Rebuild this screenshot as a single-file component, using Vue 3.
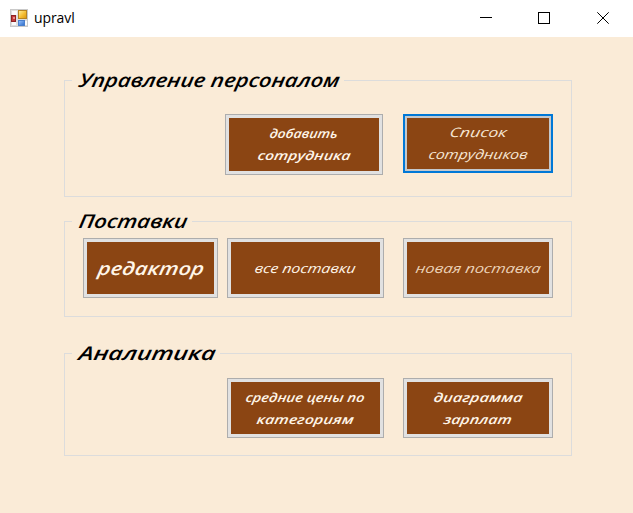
<script setup>
const groups = [
  {
    id: 'staff',
    title: { text: 'Управление персоналом', width: 262 },
    buttons: [
      { id: 'add', size: 12.5, bold: true, lines: [{ text: 'добавить', width: 68 }, { text: 'сотрудника', width: 93 }] },
      { id: 'list', size: 13, focused: true, lines: [{ text: 'Список', width: 57 }, { text: 'сотрудников', width: 99 }] },
    ],
  },
  {
    id: 'supply',
    title: { text: 'Поставки', width: 110 },
    buttons: [
      { id: 'editor', size: 18, bold: true, lines: [{ text: 'редактор', width: 106 }] },
      { id: 'all', size: 13, lines: [{ text: 'все поставки', width: 101 }] },
      { id: 'new', size: 13, dim: true, lines: [{ text: 'новая поставка', width: 125 }] },
    ],
  },
  {
    id: 'analytics',
    title: { text: 'Аналитика', width: 138 },
    buttons: [
      { id: 'prices', size: 12.5, bold: true, lines: [{ text: 'средние цены по', width: 119 }, { text: 'категориям', width: 97 }] },
      { id: 'chart', size: 12.5, bold: true, lines: [{ text: 'диаграмма', width: 89 }, { text: 'зарплат', width: 68 }] },
    ],
  },
]
</script>

<template>
  <div class="window">
    <header class="titlebar">
      <svg class="app-icon" width="18" height="18" viewBox="0 0 18 18">
        <defs>
          <linearGradient id="gold" x2="1" y2="1"><stop stop-color="#fff0a0" /><stop offset=".55" stop-color="#f5bd32" /><stop offset="1" stop-color="#d79512" /></linearGradient>
          <linearGradient id="blue" x2="1" y2="1"><stop stop-color="#9cc5ff" /><stop offset="1" stop-color="#2869c7" /></linearGradient>
        </defs>
        <rect x=".5" y=".5" width="17" height="17" fill="#dedede" stroke="#c9c9c9" />
        <path d="M2 2h5v4H2zM2 13h4v3H2zM15 12h2v4h-2z" fill="#fafafa" />
        <rect x="1.5" y="6.5" width="4" height="6" fill="#c33a3a" stroke="#8f2222" />
        <path d="M3 8h2v2H3z" fill="#ea8b86" />
        <rect x="8.5" y="1.5" width="8" height="8" fill="url(#gold)" stroke="#b78422" />
        <rect x="8.5" y="11.5" width="6" height="5" fill="url(#blue)" stroke="#4a7fcb" />
      </svg>
      <span class="caption">upravl</span>
      <nav class="controls">
        <svg class="minimize" width="12" height="12" viewBox="0 0 12 12" shape-rendering="crispEdges"><path d="M0 5.5h12" /></svg>
        <svg class="maximize" width="12" height="12" viewBox="0 0 12 12" shape-rendering="crispEdges"><path d="M.5.5h11v11H.5z" /></svg>
        <svg width="12" height="12" viewBox="0 0 12 12"><path d="M.3.3l11.4 11.4M11.7.3L.3 11.7" /></svg>
      </nav>
    </header>
    <main class="form">
      <section v-for="g in groups" :key="g.id" class="group" :class="g.id">
        <div class="legend">
          <i class="rule lead"></i>
          <svg class="title" :width="g.title.width" height="30">
            <g transform="translate(0 20.3) skewX(-10)">
              <text :textLength="g.title.width - 1.5" lengthAdjust="spacingAndGlyphs">{{ g.title.text }}</text>
            </g>
          </svg>
          <i class="rule tail"></i>
        </div>
        <div class="body">
          <button v-for="b in g.buttons" :key="b.id" class="btn" :class="[b.id, { focused: b.focused, bold: b.bold, dim: b.dim }]">
            <span class="face">
              <svg v-for="l in b.lines" :key="l.text" class="line" :width="l.width" height="22">
                <g transform="translate(0 14.6) skewX(-10)">
                  <text :font-size="b.size" :textLength="l.width" lengthAdjust="spacingAndGlyphs">{{ l.text }}</text>
                </g>
              </svg>
            </span>
          </button>
        </div>
      </section>
    </main>
  </div>
</template>

<style>
body { margin: 0; }
</style>

<style scoped>
.window { width: 633px; height: 513px; background: #faebd7; display: flex; flex-direction: column; overflow: hidden; }
.titlebar { height: 37px; flex: none; background: #fff; display: flex; align-items: center; box-sizing: border-box; padding: 0 24px 2px 10px; }
.app-icon { flex: none; }
.caption { margin-left: 6px; font: 14px/18px "Open Sans", "Noto Sans", sans-serif; letter-spacing: -0.1px; color: #000; }
.controls { margin-left: auto; display: flex; }
.controls svg { fill: none; stroke: #000; stroke-width: 1; }
.minimize { margin-right: 46px; }
.maximize { margin-right: 47px; }
.form { padding-left: 64px; width: 508px; }
.group { box-sizing: border-box; display: flex; flex-direction: column; }
.staff { height: 130px; margin-top: 30px; }
.supply { height: 109px; margin-top: 11px; }
.analytics { height: 116px; margin-top: 23px; }
.legend { height: 26px; display: flex; align-items: flex-start; flex: none; }
.rule { box-sizing: border-box; height: 13px; margin-top: 13px; border-top: 1px solid #dcdcdc; }
.lead { width: 8px; margin-right: 6px; border-left: 1px solid #dcdcdc; }
.tail { flex: 1; margin-left: 4px; border-right: 1px solid #dcdcdc; }
.title { flex: none; overflow: visible; }
.title text { font: italic 600 19px "Open Sans", "Noto Sans", sans-serif; font-weight: 550; fill: #000; }
.body { flex: 1; min-height: 0; display: flex; align-items: flex-start; border: 1px solid #dcdcdc; border-top: 0; box-sizing: border-box; }
.staff .body { padding: 21px 0 0 160px; gap: 20px; }
.supply .body { padding: 4px 0 0 18px; }
.analytics .body { padding: 12px 0 0 162px; gap: 19px; }
.btn { box-sizing: border-box; flex: none; width: 157px; height: 60px; margin: 0; padding: 3px; border: 1px solid #adadad; border-radius: 0; background: #e1e1e1; color: #fff5e8; font-family: "Open Sans", "Noto Sans", sans-serif; }
.btn.add { width: 158px; height: 61px; }
.btn.list, .btn.new, .btn.chart { width: 150px; }
.btn.list { height: 59px; }
.btn.editor { width: 135px; margin-right: 9px; }
.btn.all { margin-right: 19px; }
.btn.focused { border: 2px solid #0078d7; padding: 2px; background: #c4c8cc; }
.face { width: 100%; height: 100%; background: #8b4513; display: flex; flex-direction: column; justify-content: center; align-items: center; box-sizing: border-box; padding: 1px 2px 0 0; }
.editor .face { padding-top: 5px; }
.line { flex: none; overflow: visible; }
.line text { font-style: italic; fill: currentColor; }
.bold .line text { font-weight: 600; }
.dim { color: #ecd3b8; }
.btn.dim { color: #ecd3b8; }
.btn.focused { color: #f6e6d4; }
</style>
